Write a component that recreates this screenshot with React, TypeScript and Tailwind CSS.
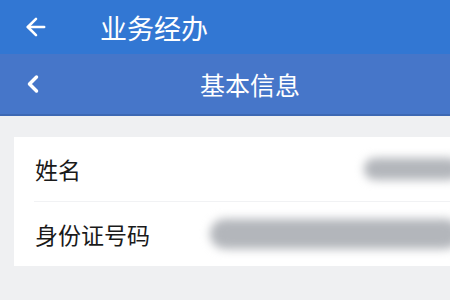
import { ArrowLeft, ChevronLeft } from "lucide-react";

const FONT = { fontFamily: '"Noto Sans CJK SC", "Noto Sans", sans-serif' };

export default function App() {
  return (
    <div className="h-[300px] w-[450px] overflow-hidden bg-[#eff0f2]" style={FONT}>
      <div className="flex h-[54px] items-center bg-[#3277d3] pl-[22px] text-white">
        <ArrowLeft className="h-[28px] w-[28px]" strokeWidth={2.2} />
        <span className="ml-[50px] text-[27px] leading-none">业务经办</span>
      </div>
      <div className="relative flex h-[62px] items-center justify-center border-b-2 border-[#3d68b3] bg-[#4676c9] pl-[50px] text-white">
        <ChevronLeft className="absolute left-[19px] h-[28px] w-[28px]" strokeWidth={3} />
        <span className="text-[25px] leading-none">基本信息</span>
      </div>
      <div className="ml-[14px] mt-[21px] bg-white">
        <Row label="姓名" blur="ml-auto w-[96px] h-[22px]" />
        <div className="ml-[20px] h-px bg-[#f1f2f4]" />
        <Row label="身份证号码" blur="ml-[60px] flex-1 h-[30px]" />
      </div>
    </div>
  );
}

function Row({ label, blur }: { label: string; blur: string }) {
  return (
    <div className="flex h-[64px] items-center pl-[21px] text-[23px] text-[#1a1a1a]">
      <span className="leading-none">{label}</span>
      <div className={`${blur} -mr-[10px] rounded-full bg-[#b3b6bb] blur-[5px]`} />
    </div>
  );
}
